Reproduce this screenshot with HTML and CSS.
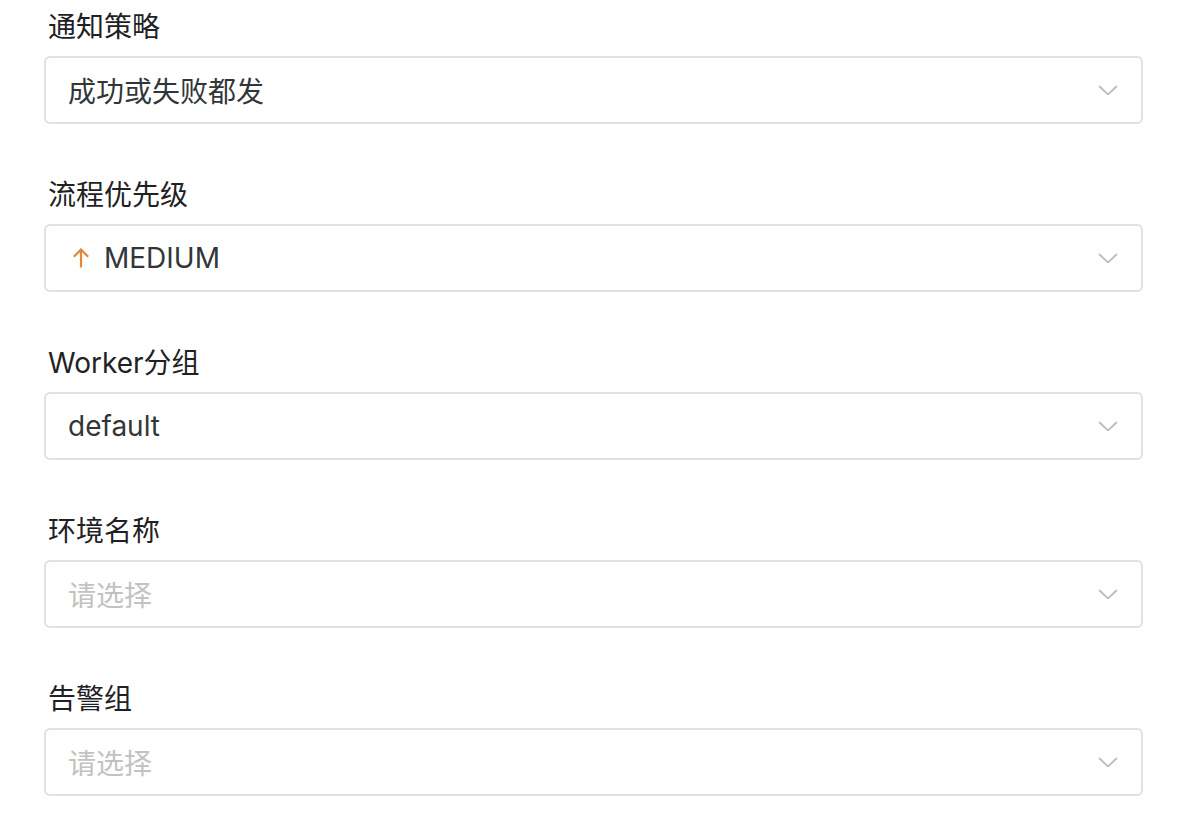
FILE: index.html
```html
<!DOCTYPE html>
<html lang="zh-CN">
<head>
<meta charset="utf-8">
<link rel="stylesheet" href="styles.css">
</head>
<body>
<div class="form">
  <div class="item">
    <div class="label">通知策略</div>
    <div class="select">
      <span class="value">成功或失败都发</span>
      <svg class="chev" viewBox="0 0 20 10"><path d="M1 1 L10 9.5 L19 1" /></svg>
    </div>
  </div>
  <div class="item">
    <div class="label">流程优先级</div>
    <div class="select">
      <span class="value">
        <svg class="prio" viewBox="0 0 16 20"><path d="M8 19.5 V1.5 M0.8 8.8 L8 1.5 L15.2 8.8" /></svg>
        MEDIUM
      </span>
      <svg class="chev" viewBox="0 0 20 10"><path d="M1 1 L10 9.5 L19 1" /></svg>
    </div>
  </div>
  <div class="item">
    <div class="label">Worker分组</div>
    <div class="select">
      <span class="value">default</span>
      <svg class="chev" viewBox="0 0 20 10"><path d="M1 1 L10 9.5 L19 1" /></svg>
    </div>
  </div>
  <div class="item">
    <div class="label">环境名称</div>
    <div class="select">
      <span class="placeholder">请选择</span>
      <svg class="chev" viewBox="0 0 20 10"><path d="M1 1 L10 9.5 L19 1" /></svg>
    </div>
  </div>
  <div class="item">
    <div class="label">告警组</div>
    <div class="select">
      <span class="placeholder">请选择</span>
      <svg class="chev" viewBox="0 0 20 10"><path d="M1 1 L10 9.5 L19 1" /></svg>
    </div>
  </div>
</div>
</body>
</html>
```

FILE: styles.css
```css
html, body {
  margin: 0;
  padding: 0;
  background: #ffffff;
}
body {
  font-family: Inter, "Noto Sans CJK SC", sans-serif;
  font-size: 28px;
}
.form {
  padding: 7px 41px 0 44px;
  display: flex;
  flex-direction: column;
  gap: 51px;
}
.item {
  display: flex;
  flex-direction: column;
  gap: 9px;
}
.label {
  height: 40px;
  line-height: 40px;
  padding-left: 4px;
  color: #1f2225;
}
.select {
  box-sizing: border-box;
  height: 68px;
  border: 2px solid #e0e0e6;
  border-radius: 6px;
  padding: 0 23px 0 22px;
  display: flex;
  align-items: center;
  justify-content: space-between;
}
.value {
  color: #333639;
  display: flex;
  align-items: center;
}
.placeholder {
  color: #c2c2c2;
}
.chev {
  flex-shrink: 0;
  width: 20px;
  height: 10px;
  fill: none;
  stroke: #bdbdbd;
  stroke-width: 1.8;
}
.prio {
  flex-shrink: 0;
  width: 16px;
  height: 20px;
  fill: none;
  stroke: #e3883a;
  stroke-width: 2.2;
  margin: 0 15px 0 5px;
}
```
